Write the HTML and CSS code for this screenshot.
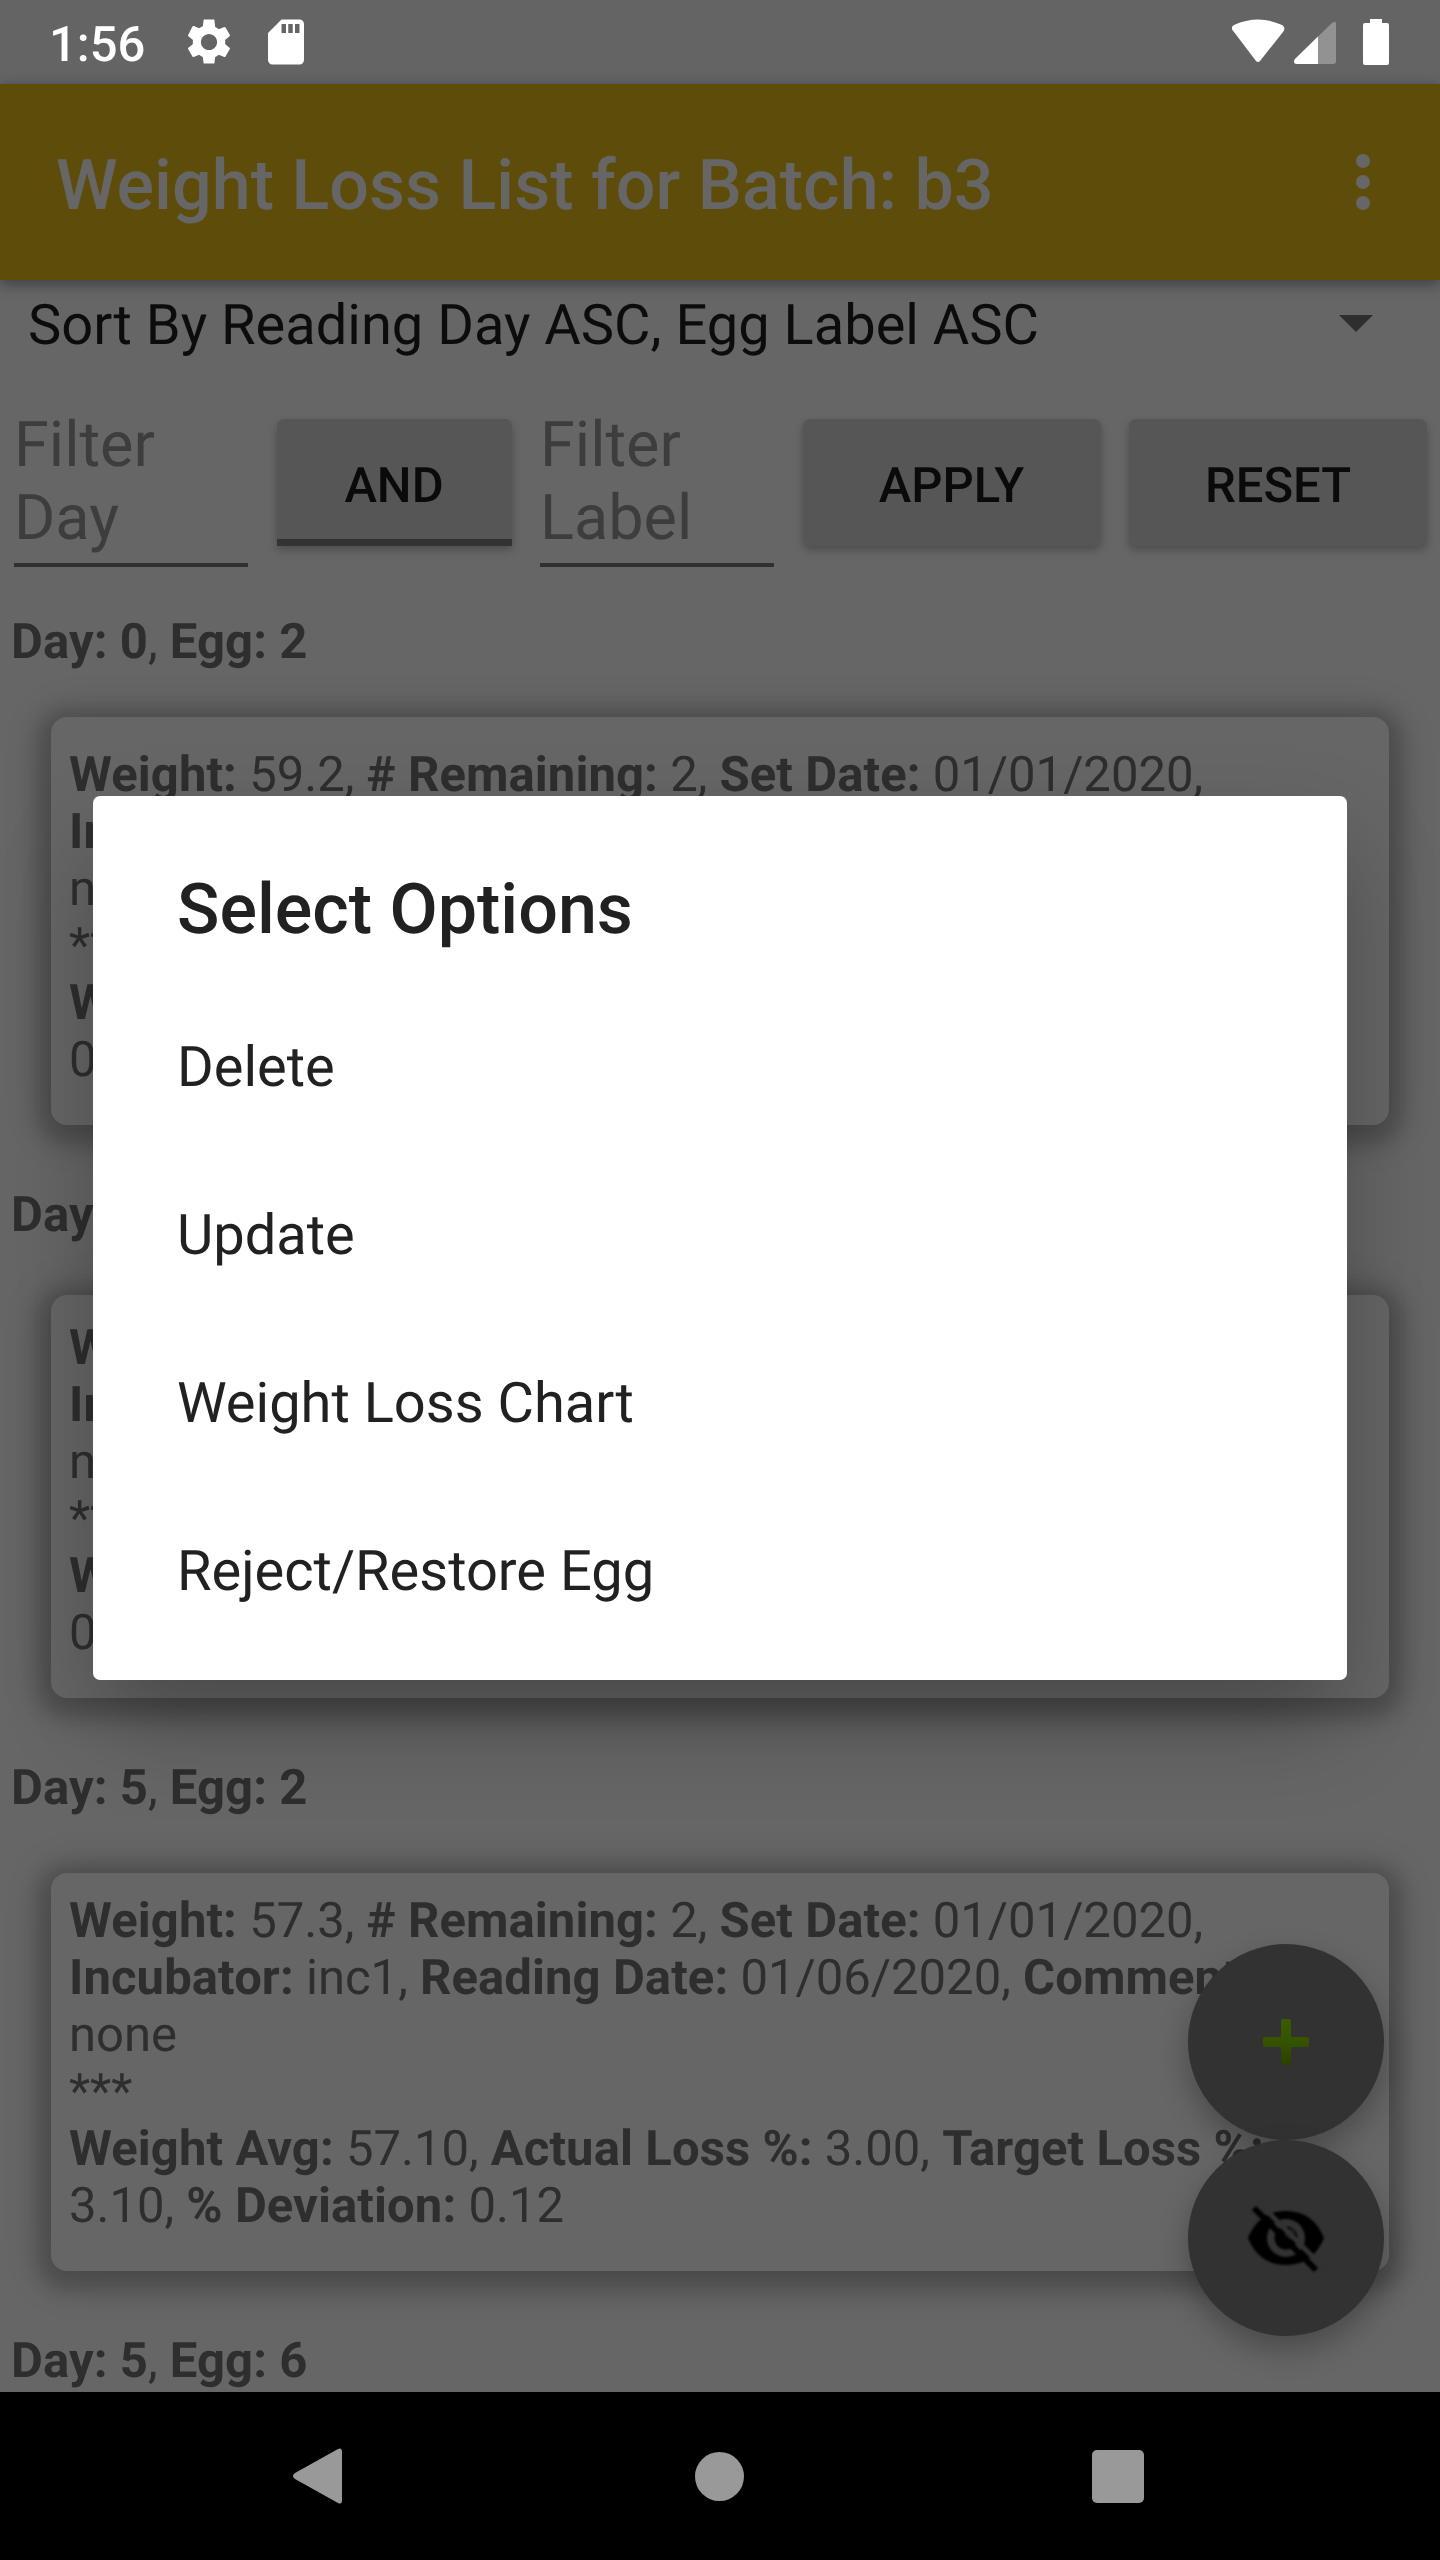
FILE: index.html
```html
<!DOCTYPE html>
<html lang="en">
<head>
<meta charset="utf-8">
<title>Weight Loss List</title>
<link rel="stylesheet" href="styles.css">
</head>
<body>
<div class="screen">
  <div class="statusbar">
    <span class="clock">1:56</span>
    <svg class="status-icon gear" viewBox="0 0 24 24"><path d="M19.14 12.94c.04-.3.06-.61.06-.94 0-.32-.02-.64-.07-.94l2.03-1.58c.18-.14.23-.41.12-.61l-1.92-3.32c-.12-.22-.37-.29-.59-.22l-2.39.96c-.5-.38-1.03-.7-1.62-.94L14.4 2.2c-.04-.24-.24-.2-.48-.2h-3.84c-.24 0-.43-.04-.47.2l-.36 2.75c-.59.24-1.13.57-1.62.94l-2.39-.96c-.22-.08-.47 0-.59.22L2.74 8.87c-.12.21-.08.47.12.61l2.03 1.58c-.05.3-.09.63-.09.94s.02.64.07.94l-2.03 1.58c-.18.14-.23.41-.12.61l1.92 3.32c.12.22.37.29.59.22l2.39-.96c.5.38 1.03.7 1.62.94l.36 2.75c.05.24.24.2.48.2h3.84c.24 0 .44.04.47-.2l.36-2.75c.59-.24 1.13-.56 1.62-.94l2.39.96c.22.08.47 0 .59-.22l1.92-3.32c.12-.22.07-.47-.12-.61l-2.01-1.58zM12 15.6c-1.98 0-3.6-1.62-3.6-3.6s1.620-3.6 3.6-3.6 3.6 1.62 3.6 3.6-1.62 3.6-3.6 3.6z"/></svg>
    <svg class="status-icon sdcard" viewBox="0 0 24 24"><path d="M18 2h-8L4.02 8 4 20c0 1.1.9 2 2 2h12c1.1 0 2-.9 2-2V4c0-1.1-.9-2-2-2zm-6 6h-2V4h2v4zm3 0h-2V4h2v4zm3 0h-2V4h2v4z"/></svg>
    <svg class="signals" viewBox="0 0 160 84">
      <path d="M2 32C-1 29 -1 27 2 25Q26 14 50 25C53 27 53 29 51 32L28 61Q26 63 24 61Z"/>
      <path opacity=".3" d="M66 64Q62 64 62 61.500 62 60 63.500 58.500L100 23Q104 20 104 24V61Q104 64 101 64Z"/>
      <path d="M86 64H65Q62 64 62 61.500 62 60 63.500 58.500L86 36.500Z"/>
      <path d="M138 19H150V23H155Q157 23 157 25V63Q157 65 155 65H133Q131 65 131 63V25Q131 23 133 23H138Z"/>
    </svg>
  </div>
  <div class="appbar">
    <h1 class="appbar-title">Weight Loss List for Batch: b3</h1>
    <svg class="overflow" viewBox="0 0 14 56"><circle cx="7" cy="7" r="7"/><circle cx="7" cy="28" r="7"/><circle cx="7" cy="49" r="7"/></svg>
  </div>
  <div class="spinner">
    <span>Sort By Reading Day ASC, Egg Label ASC</span>
    <svg class="arrow" viewBox="0 0 34 17"><path d="M0 0H34L17 17Z"/></svg>
  </div>
  <div class="filters">
    <div class="field">Filter<br>Day</div>
    <div class="button toggle">AND</div>
    <div class="field">Filter<br>Label</div>
    <div class="button wide">APPLY</div>
    <div class="button wide">RESET</div>
  </div>
  <div class="list">
    <div class="item">
      <div class="item-head"><b>Day: 0</b>, <b>Egg: 2</b></div>
      <div class="card card-upper"><b>Weight:</b> 59.2, <b># Remaining:</b> 2, <b>Set Date:</b> 01/01/2020,<br><b>Inc</b><br>none<br>***<br><b>We</b><br>0.0</div>
    </div>
    <div class="item">
      <div class="item-head"><b>Day:</b></div>
      <div class="card card-middle"><b>We</b><br><b>Inc</b><br>none<br>***<br><b>We</b><br>0.0</div>
    </div>
    <div class="item">
      <div class="item-head"><b>Day: 5</b>, <b>Egg: 2</b></div>
      <div class="card card-lower"><b>Weight:</b> 57.3, <b># Remaining:</b> 2, <b>Set Date:</b> 01/01/2020,<br><b>Incubator:</b> inc1, <b>Reading Date:</b> 01/06/2020, <b>Comment:</b><br>none<br>***<br><b>Weight Avg:</b> 57.10, <b>Actual Loss %:</b> 3.00, <b>Target Loss %:</b><br>3.10, <b>% Deviation:</b> 0.12</div>
    </div>
    <div class="item">
      <div class="item-head"><b>Day: 5</b>, <b>Egg: 6</b></div>
    </div>
  </div>
  <div class="fabs">
    <div class="fab"><svg class="plus" viewBox="0 0 46 46"><defs><linearGradient id="g" x1="0" y1="0" x2="0" y2="1"><stop offset="0" stop-color="#3a5c00"/><stop offset=".5" stop-color="#365300"/><stop offset="1" stop-color="#2a4000"/></linearGradient></defs><path fill="url(#g)" d="M20 0H26Q28 0 28 2V18H44Q46 18 46 20V26Q46 28 44 28H28V44Q28 46 26 46H20Q18 46 18 44V28H2Q0 28 0 26V20Q0 18 2 18H18V2Q18 0 20 0Z"/></svg></div>
    <div class="fab"><svg class="eye" viewBox="0 0 76 68">
      <path d="M0 34Q11 7 38 7T76 34Q65 61 38 61T0 34Z"/>
      <circle cx="38" cy="34" r="19" fill="#323232"/>
      <circle cx="38" cy="34" r="11.500"/>
      <circle cx="42" cy="30" r="4" fill="none" stroke="#262626" stroke-width="2"/>
      <path d="M11 -1L75 63" stroke="#323232" stroke-width="5"/>
      <path d="M6 4L68 66" stroke="#000" stroke-width="6"/>
    </svg></div>
  </div>
  <div class="navbar">
    <svg class="nav-back" viewBox="0 0 50 56"><path d="M45 1Q49 -1 49 4V52Q49 57 45 55L2 31Q-2 28 2 25Z"/></svg>
    <div class="nav-home"></div>
    <div class="nav-recent"></div>
  </div>
  <div class="dialog">
    <h2 class="dialog-title">Select Options</h2>
    <div class="option">Delete</div>
    <div class="option">Update</div>
    <div class="option">Weight Loss Chart</div>
    <div class="option">Reject/Restore Egg</div>
  </div>
</div>
</body>
</html>
```
FILE: styles.css
```css
* { box-sizing: border-box; }
body { margin: 0; background: #666; font-family: Roboto, sans-serif; text-rendering: geometricPrecision; }
.screen { position: relative; width: 1440px; height: 2560px; overflow: hidden; display: flex; flex-direction: column; background: #666; }

.statusbar { height: 84px; flex: none; display: flex; align-items: center; padding: 0 28px 0 49px; background: #646464; color: #fff; fill: #fff; }
.clock { font-size: 49px; font-weight: 500; line-height: 57px; margin-top: 4px; width: 133px; }
.status-icon { width: 54px; height: 54px; }
.sdcard { margin-left: 23px; }
.signals { width: 160px; height: 84px; margin-left: auto; margin-right: 20px; }

.appbar { position: relative; height: 196px; flex: none; display: flex; align-items: center; justify-content: space-between; padding: 0 70px 0 56px; background: #5e4d0a; box-shadow: 0 4px 14px rgba(0, 0, 0, .4); }
.appbar-title { margin: 8px 0 0; font-size: 70px; font-weight: 500; line-height: 82px; color: #666; letter-spacing: .03px; }
.overflow { width: 14px; height: 56px; fill: #666; }

.spinner { height: 90px; flex: none; display: flex; align-items: center; justify-content: space-between; padding: 0 67px 0 28px; font-size: 56px; color: #0c0c0c; }
.arrow { width: 34px; height: 17px; margin-top: -3px; fill: #2e2e2e; }

.filters { flex: none; height: 197px; display: flex; gap: 28.500px; padding: 37px 13px 0 14px; }
.field { width: 234px; height: 160px; padding-top: 2px; border-bottom: 4px solid #303030; font-size: 63px; line-height: 73px; color: #3d3d3d; }
.button { width: 235px; height: 127px; margin-top: 12px; border-radius: 7px; background: #565656; box-shadow: 0 4px 9px rgba(0, 0, 0, .25); color: #0a0a0a; font-size: 49px; font-weight: 500; line-height: 134px; text-align: center; }
.toggle { border-bottom: 7px solid #333; border-radius: 7px 7px 0 0; }
.wide { width: 298px; }

.list { height: 1825px; flex: none; padding-top: 45px; overflow: hidden; color: #2e2e2e; font-size: 49px; line-height: 57px; }
.list b { letter-spacing: .09px; }
.item { height: 573px; }
.item-head { height: 57px; padding: 1px 0 0 11px; }
.card { margin-left: 51px; margin-right: 51px; padding-left: 18px; border-radius: 16px; background: #666; box-shadow: 0 6px 18px 14px rgba(0, 0, 0, .16), 0 4px 40px 8px rgba(0, 0, 0, .16); white-space: nowrap; }
.card-upper { margin-top: 48px; padding-top: 29px; height: 408px; }
.card-middle { margin-top: 53px; padding-top: 24px; height: 403px; }
.card-lower { margin-top: 58px; padding-top: 19px; height: 398px; }

.fabs { position: absolute; left: 1188px; top: 1944px; display: flex; flex-direction: column; }
.fab { width: 196px; height: 196px; border-radius: 50%; display: flex; align-items: center; justify-content: center; background: #323232; box-shadow: 0 14px 30px rgba(0, 0, 0, .28); }
.plus { width: 46px; height: 46px; }
.eye { width: 76px; height: 68px; overflow: visible; filter: blur(1px); }

.navbar { position: relative; height: 168px; flex: none; display: flex; align-items: center; justify-content: space-between; padding: 0 296px 0 293px; background: #000; }
.nav-back { width: 50px; height: 56px; fill: #999; }
.nav-home { width: 49px; height: 49px; margin-left: 3px; border-radius: 50%; background: #999; }
.nav-recent { width: 52px; height: 53px; border-radius: 5px; background: #999; }

.dialog { position: absolute; left: 93px; top: 796px; width: 1254px; height: 884px; padding: 73px 84px 0; border-radius: 7px; background: #fff; box-shadow: 0 44px 90px -8px rgba(0, 0, 0, .3); color: #212121; }
.dialog-title { margin: 0 0 32px; font-size: 70px; font-weight: 500; line-height: 82px; }
.option { height: 168px; font-size: 56px; line-height: 168px; }
```
